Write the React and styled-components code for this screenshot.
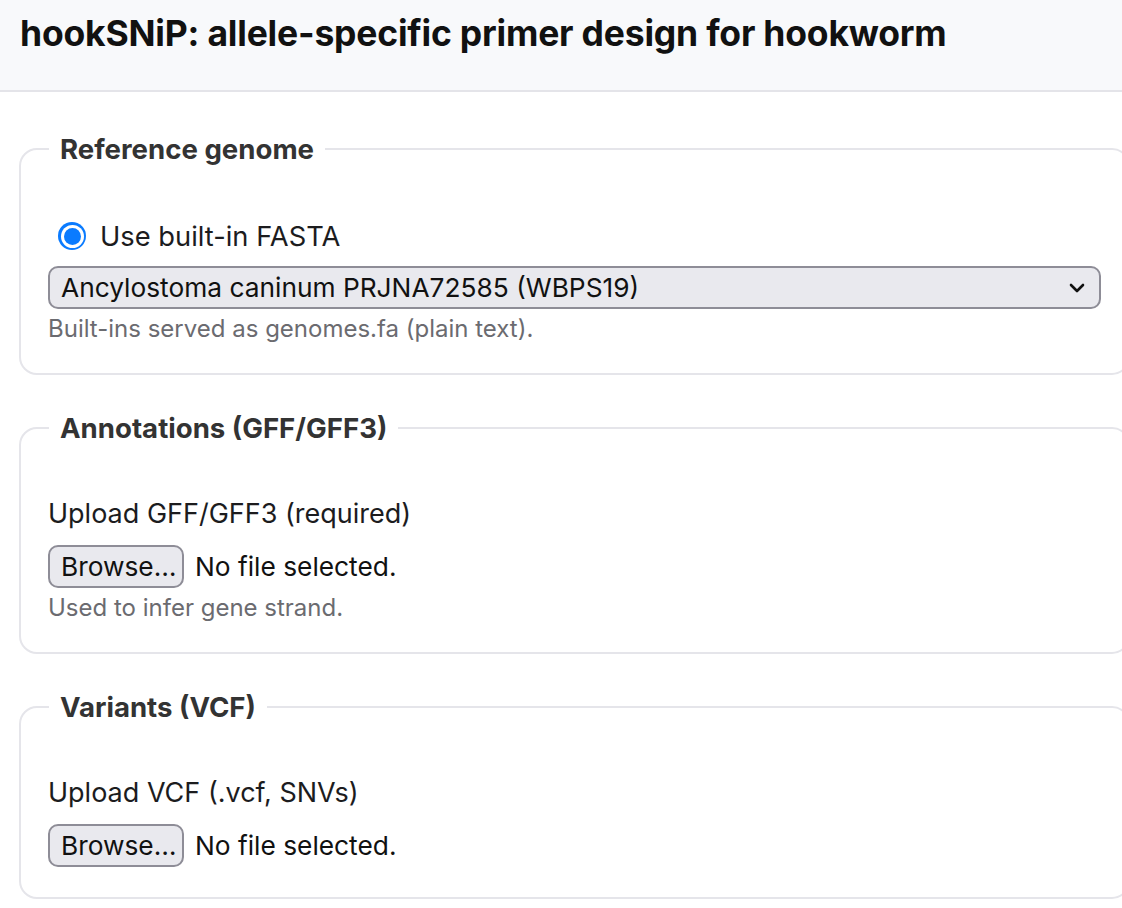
import styled, { createGlobalStyle } from 'styled-components'

const GlobalStyle = createGlobalStyle`
  html, body {
    margin: 0;
    padding: 0;
    overflow-x: hidden;
    background: #fff;
  }
  body {
    font-family: Inter, "Liberation Sans", sans-serif;
    color: #1c1c1e;
  }
`

const Header = styled.header`
  background: #f8f9fb;
  border-bottom: 2px solid #e4e4e9;
  height: 90px;
  padding: 0 20px;
  display: flex;
  align-items: center;
`

const Title = styled.h1`
  margin: 0 0 23px;
  font-size: 35.5px;
  font-weight: 700;
  color: #111;
  letter-spacing: -0.2px;
  white-space: nowrap;
`

const Main = styled.main`
  padding: 40px 0 0 19px;
  width: 1130px;
  display: flex;
  flex-direction: column;
  gap: 36px;
`

const Fieldset = styled.fieldset`
  box-sizing: border-box;
  width: 1111px;
  margin: 0;
  border: 2px solid #e5e5ea;
  border-radius: 18px;
  padding: 51px 27px 30px;
`

const Legend = styled.legend`
  margin-left: 1px;
  padding: 0 11px;
  font-size: 27.6px;
  font-weight: 700;
  color: #333;
`

const RadioRow = styled.label`
  display: flex;
  align-items: center;
  gap: 14px;
  padding-left: 10px;
  font-size: 27.3px;
  height: 34px;
  margin: 2px 0 13px;
`

const Radio = styled.span`
  box-sizing: border-box;
  width: 28px;
  height: 28px;
  border-radius: 50%;
  background: #0a7bff;
  display: flex;
  align-items: center;
  justify-content: center;

  &::after {
    content: '';
    width: 17px;
    height: 17px;
    border-radius: 50%;
    background: #0a7bff;
    box-shadow: 0 0 0 3px #fff;
  }
`

const SelectBox = styled.div`
  box-sizing: border-box;
  height: 43px;
  border: 2px solid #8e8d97;
  border-radius: 10px;
  background: #e9e9ee;
  display: flex;
  align-items: center;
  justify-content: space-between;
  padding: 0 14px 0 11px;
  font-size: 26.3px;
  color: #111;
`

const Label = styled.div`
  font-size: 27px;
  color: #1c1c1e;
  height: 34px;
  display: flex;
  align-items: center;
  margin-bottom: 15px;
`

const FileRow = styled.div`
  display: flex;
  align-items: center;
  gap: 11px;
  font-size: 26.3px;
  color: #111;
`

const BrowseButton = styled.button`
  box-sizing: border-box;
  height: 43px;
  width: 136px;
  border: 2px solid #8e8d97;
  border-radius: 10px;
  background: #e9e9ee;
  font-family: inherit;
  font-size: 26.3px;
  color: #111;
  padding: 0 11px;
  text-align: left;
`

const Hint = styled.div`
  font-size: 24px;
  color: #6b6b70;
  margin-top: 5px;
`

function Chevron() {
  return (
    <svg width="16" height="10" viewBox="0 0 16 10">
      <path d="M2 2 L8 8 L14 2" fill="none" stroke="#111" strokeWidth="2.6" strokeLinecap="round" strokeLinejoin="round" />
    </svg>
  )
}

function FileInput() {
  return (
    <FileRow>
      <BrowseButton type="button">Browse…</BrowseButton>
      <span>No file selected.</span>
    </FileRow>
  )
}

export default function App() {
  return (
    <>
      <GlobalStyle />
      <Header>
        <Title>hookSNiP: allele-specific primer design for hookworm</Title>
      </Header>
      <Main>
        <Fieldset>
          <Legend>Reference genome</Legend>
          <RadioRow>
            <Radio />
            Use built-in FASTA
          </RadioRow>
          <SelectBox>
            <span>Ancylostoma caninum PRJNA72585 (WBPS19)</span>
            <Chevron />
          </SelectBox>
          <Hint>Built-ins served as genomes.fa (plain text).</Hint>
        </Fieldset>

        <Fieldset>
          <Legend>Annotations (GFF/GFF3)</Legend>
          <Label>Upload GFF/GFF3 (required)</Label>
          <FileInput />
          <Hint>Used to infer gene strand.</Hint>
        </Fieldset>

        <Fieldset>
          <Legend>Variants (VCF)</Legend>
          <Label>Upload VCF (.vcf, SNVs)</Label>
          <FileInput />
        </Fieldset>
      </Main>
    </>
  )
}
